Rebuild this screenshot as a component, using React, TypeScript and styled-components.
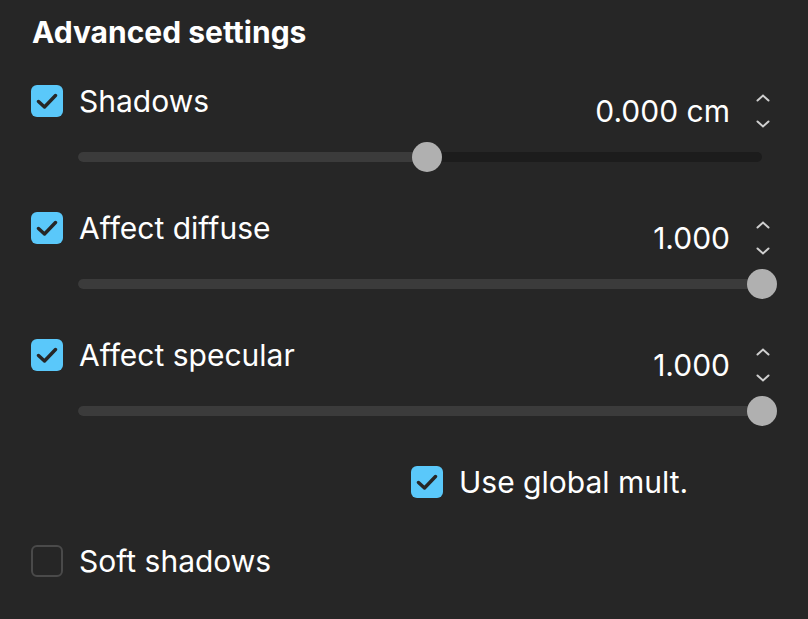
import React from "react";
import styled, { createGlobalStyle } from "styled-components";

const GlobalStyle = createGlobalStyle`
  html, body {
    margin: 0;
    padding: 0;
    background: #262626;
  }
  body {
    font-family: Inter, "Noto Sans", "Liberation Sans", sans-serif;
    color: #ffffff;
  }
`;

const Panel = styled.div`
  width: 808px;
  height: 619px;
  box-sizing: border-box;
  padding: 14px 32px 0 31px;
  background: #262626;
  display: flex;
  flex-direction: column;
`;

const Title = styled.h2`
  margin: 0 0 0 1px;
  font-size: 30px;
  font-weight: 700;
  line-height: 36px;
`;

const Section = styled.div<{ $top: number }>`
  margin-top: ${(p) => p.$top}px;
  display: grid;
  grid-template-columns: 32px 1fr auto;
  column-gap: 16px;
`;

const Box = styled.span<{ $checked: boolean }>`
  width: 32px;
  height: 32px;
  box-sizing: border-box;
  border-radius: 6px;
  display: flex;
  align-items: center;
  justify-content: center;
  flex-shrink: 0;
  background: ${(p) => (p.$checked ? "#5ac8fa" : "transparent")};
  border: ${(p) => (p.$checked ? "none" : "2px solid #4a4a4a")};
`;

const Label = styled.span`
  font-size: 30px;
  line-height: 32px;
  white-space: nowrap;
`;

const ValueGroup = styled.div`
  margin: 9px 6px 0 0;
  display: flex;
  align-items: center;
  gap: 26px;
  height: 34px;
`;

const Value = styled.span`
  font-size: 30px;
  line-height: 34px;
`;

const Spinner = styled.div`
  width: 14px;
  height: 34px;
  display: flex;
  flex-direction: column;
  justify-content: space-between;
  align-items: center;
`;

const SliderWrap = styled.div`
  grid-column: 2 / 4;
  margin: 14px 0 0 -1px;
  height: 30px;
  display: flex;
  align-items: center;
`;

const Track = styled.div`
  position: relative;
  width: 684px;
  height: 10px;
  border-radius: 5px;
  background: #1c1c1c;
`;

const Fill = styled.div`
  height: 100%;
  border-radius: 5px;
  background: #3b3b3b;
`;

const Thumb = styled.div`
  position: absolute;
  top: 50%;
  width: 30px;
  height: 30px;
  margin: -15px 0 0 -15px;
  border-radius: 50%;
  background: #b0b0b0;
`;

const CheckRow = styled.label<{ $top: number; $left: number }>`
  margin-top: ${(p) => p.$top}px;
  margin-left: ${(p) => p.$left}px;
  display: flex;
  align-items: center;
  gap: 16px;
`;

const Check = ({ checked }: { checked: boolean }) => (
  <Box $checked={checked}>
    {checked && (
      <svg width="22" height="16" viewBox="0 0 22 16">
        <path
          d="M2.5 8.5 L8.5 14 L19.5 2.5"
          fill="none"
          stroke="#262626"
          strokeWidth="3.4"
          strokeLinecap="round"
          strokeLinejoin="round"
        />
      </svg>
    )}
  </Box>
);

const Chevrons = () => (
  <Spinner>
    <svg width="14" height="8" viewBox="0 0 14 8">
      <path d="M1.5 6.5 L7 1.5 L12.5 6.5" fill="none" stroke="#cfcfcf" strokeWidth="2" strokeLinecap="round" />
    </svg>
    <svg width="14" height="8" viewBox="0 0 14 8">
      <path d="M1.5 1.5 L7 6.5 L12.5 1.5" fill="none" stroke="#cfcfcf" strokeWidth="2" strokeLinecap="round" />
    </svg>
  </Spinner>
);

type SettingProps = {
  label: string;
  value: string;
  ratio: number;
  top: number;
};

const Setting = ({ label, value, ratio, top }: SettingProps) => (
  <Section $top={top}>
    <Check checked />
    <Label>{label}</Label>
    <ValueGroup>
      <Value>{value}</Value>
      <Chevrons />
    </ValueGroup>
    <SliderWrap>
      <Track>
        <Fill style={{ width: `${ratio * 100}%` }} />
        <Thumb style={{ left: `${ratio * 100}%` }} />
      </Track>
    </SliderWrap>
  </Section>
);

export default function App() {
  return (
    <>
      <GlobalStyle />
      <Panel>
        <Title>Advanced settings</Title>
        <Setting label="Shadows" value="0.000 cm" ratio={0.51} top={35} />
        <Setting label="Affect diffuse" value="1.000" ratio={1} top={40} />
        <Setting label="Affect specular" value="1.000" ratio={1} top={40} />
        <CheckRow $top={40} $left={380}>
          <Check checked />
          <Label>Use global mult.</Label>
        </CheckRow>
        <CheckRow $top={47} $left={0}>
          <Check checked={false} />
          <Label>Soft shadows</Label>
        </CheckRow>
      </Panel>
    </>
  );
}
